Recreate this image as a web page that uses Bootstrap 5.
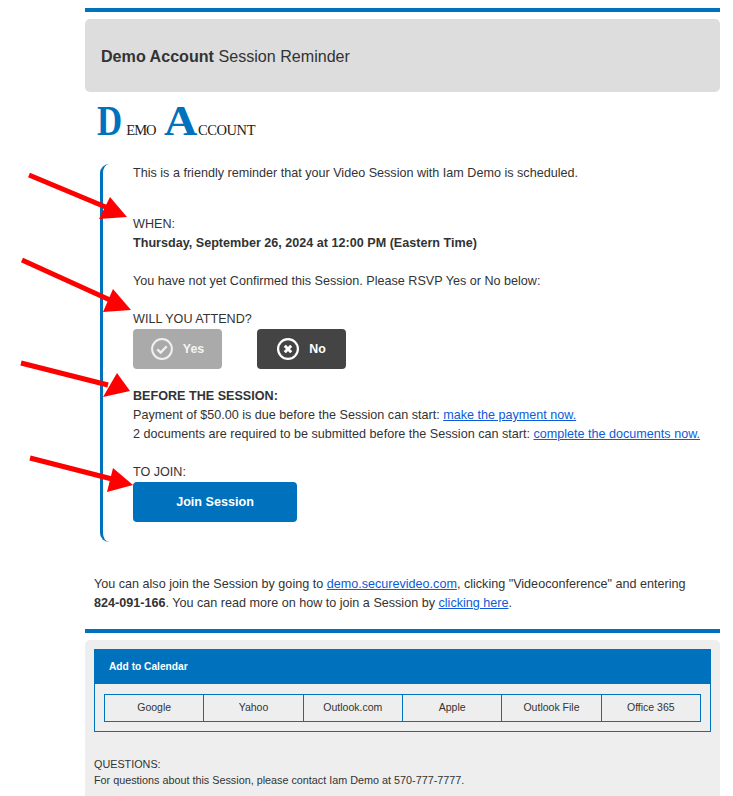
<!DOCTYPE html>
<html lang="en">
<head>
<meta charset="utf-8">
<title>Session Reminder</title>
<link href="https://cdn.jsdelivr.net/npm/bootstrap@5.3.0/dist/css/bootstrap.min.css" rel="stylesheet">
<style>
body{font-family:"Liberation Sans",Arial,sans-serif;font-size:12.6px;line-height:19px;color:#333;background:#fff;margin:0}
a{color:#0d5bd7}
.sheet{margin-left:85px;width:635px;padding-top:8px}
.rule{height:4px;background:#0071bc}
.hero{margin-top:7px;height:73px;background:#ddd;border-radius:5px;font-size:16.1px;padding:2px 0 0 16px}
.brand{margin-top:10px;height:41px;padding-left:12px;color:#222;font-family:"Liberation Serif",serif;line-height:38px}
.brand b{display:inline-block;color:#0071bc;font-size:42px;font-weight:700;line-height:38px;transform-origin:left center}
.brand span{font-size:14.5px}
.brand .g1{transform:scaleX(.83);margin-right:-1px}
.brand .em{letter-spacing:-1px}
.brand .g2{transform:scaleX(1.1);margin-left:8px;margin-right:4px}
.brand .ac{letter-spacing:-.4px}
.bracket{margin-top:21px;margin-left:15px;height:378px;border-left:3px solid #0071bc;border-radius:9px 0 0 9px;padding-left:30px}
.gap1{margin-top:32px}
.gap2{margin-top:19px}
.gap3{margin-top:18px}
.act{width:89px;height:40px;border-radius:4px;color:#fff;font-weight:700;font-size:12.4px;border:0;padding:0;gap:10px}
.act svg{display:block}
.yes,.yes:hover{background:#aaa;color:#f4f4f4}
.no,.no:hover{background:#444;color:#fff}
.acts{gap:35px}
.join,.join:hover{display:block;width:164px;height:40px;border-radius:4px;background:#0071bc;color:#fff;font-weight:700;font-size:12.6px;border:0;padding:0}
.after{margin-top:33px;padding-left:9px;padding-right:20px}
.after strong{white-space:nowrap}
.rule2{margin-top:16px}
.panel{margin-top:7px;background:#eee;border-radius:5px 5px 0 0;height:156px;padding:9px 9px 0}
.calhead{height:35px;background:#0071bc;color:#fff;font-weight:700;font-size:10.2px;line-height:36px;padding-left:15px}
.calbox{height:48px;border:1px solid #0071bc;border-top:0;padding:10px 9px 0}
.calgrid{height:28px;border:1px solid #0071bc;font-size:10.5px;line-height:24px;color:#333}
.calgrid>div{flex:1 1 0;text-align:center;border-left:1px solid #0071bc}
.calgrid>div:first-child{border-left:0}
.q{margin-top:24px;font-size:10.8px;line-height:16px}
.arrows{position:absolute;left:0;top:0;pointer-events:none}
</style>
</head>
<body>
<div class="sheet">
  <div class="rule"></div>
  <div class="hero d-flex align-items-center"><div><strong>Demo Account</strong> Session Reminder</div></div>
  <div class="brand d-flex align-items-baseline"><b class="g1">D</b><span class="em">EMO</span><b class="g2">A</b><span class="ac">CCOUNT</span></div>
  <div class="bracket">
    <div>This is a friendly reminder that your Video Session with Iam Demo is scheduled.</div>
    <div class="gap1">WHEN:<br><strong>Thursday, September 26, 2024 at 12:00 PM (Eastern Time)</strong></div>
    <div class="gap2">You have not yet Confirmed this Session. Please RSVP Yes or No below:</div>
    <div class="gap2">WILL YOU ATTEND?</div>
    <div class="d-flex acts">
      <button type="button" class="btn act yes d-flex align-items-center justify-content-center">
        <svg width="22" height="22" viewBox="0 0 22 22" fill="none" stroke="#f0f0f0"><circle cx="11" cy="11" r="9.9" stroke-width="2"/><path d="M6.3 11.4l3.4 3.2 6-6.4" stroke-width="2.4"/></svg>Yes</button>
      <button type="button" class="btn act no d-flex align-items-center justify-content-center">
        <svg width="22" height="22" viewBox="0 0 22 22" fill="none" stroke="#fff"><circle cx="11" cy="11" r="9.9" stroke-width="2.2"/><path d="M7.8 7.8l6.4 6.4M14.2 7.8l-6.4 6.4" stroke-width="3"/></svg>No</button>
    </div>
    <div class="gap3"><strong>BEFORE THE SESSION:</strong><br>Payment of $50.00 is due before the Session can start: <a href="#">make the payment now.</a><br>2 documents are required to be submitted before the Session can start: <a href="#">complete the documents now.</a></div>
    <div class="gap2">TO JOIN:</div>
    <button type="button" class="btn join">Join Session</button>
  </div>
  <div class="after">You can also join the Session by going to <a href="#">demo.securevideo.com</a>, clicking "Videoconference" and entering <strong>824-091-166</strong>. You can read more on how to join a Session by <a href="#">clicking here</a>.</div>
  <div class="rule rule2"></div>
  <div class="panel">
    <div class="calhead">Add to Calendar</div>
    <div class="calbox"><div class="calgrid d-flex"><div>Google</div><div>Yahoo</div><div>Outlook.com</div><div>Apple</div><div>Outlook File</div><div>Office 365</div></div></div>
    <div class="q">QUESTIONS:<br>For questions about this Session, please contact Iam Demo at 570-777-7777.</div>
  </div>
</div>
<svg class="arrows" width="733" height="796" fill="red" stroke="red">
  <path d="M29 175L108 208" stroke-width="5"/><path d="M110 197L99 219L127 217Z" stroke="none"/>
  <path d="M22 260L110 300" stroke-width="5"/><path d="M113 289L103 312L131 310Z" stroke="none"/>
  <path d="M21 363L108 385" stroke-width="5"/><path d="M117 373L103 397L130 391Z" stroke="none"/>
  <path d="M30 458L112 479" stroke-width="5"/><path d="M113 468L107 492L133 485Z" stroke="none"/>
</svg>
</body>
</html>
